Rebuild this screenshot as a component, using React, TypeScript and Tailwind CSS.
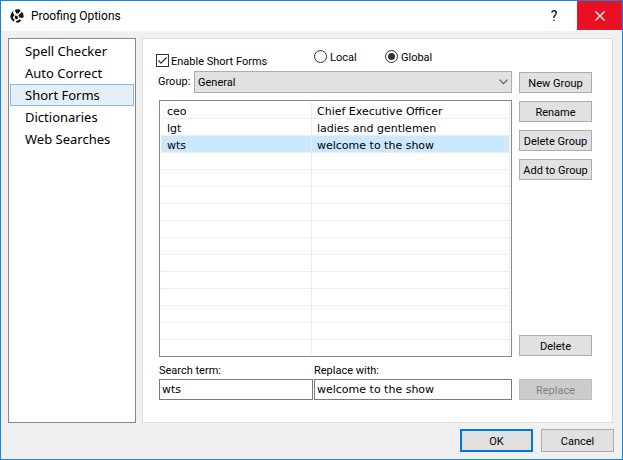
import { useState } from "react";

const sections = ["Spell Checker", "Auto Correct", "Short Forms", "Dictionaries", "Web Searches"];

const entries = [
  ["ceo", "Chief Executive Officer"],
  ["lgt", "ladies and gentlemen"],
  ["wts", "welcome to the show"],
];

const rows = Array.from({ length: 15 }, (_, i) => entries[i] ?? ["", ""]);

function PushButton({ children, disabled }: { children: string; disabled?: boolean }) {
  return (
    <button
      type="button"
      disabled={disabled}
      className="h-[21px] w-full border border-[#adadad] bg-[#e1e1e1] pt-[2px] text-center leading-4 whitespace-nowrap disabled:border-[#bfbfbf] disabled:bg-[#cccccc] disabled:text-[#838383]"
    >
      {children}
    </button>
  );
}

function Scope({ label, checked, onChange }: { label: string; checked: boolean; onChange: () => void }) {
  return (
    <label className="flex w-[71px] items-center gap-[3px]">
      <input
        type="radio"
        name="scope"
        checked={checked}
        onChange={onChange}
        className="size-[13px] shrink-0 appearance-none rounded-full border border-[#333333] bg-white bg-clip-content p-[2px] checked:bg-[#333333]"
      />
      <span className="pt-1 leading-3">{label}</span>
    </label>
  );
}

export default function App() {
  const [section, setSection] = useState("Short Forms");
  const [scope, setScope] = useState("Global");
  const [enabled, setEnabled] = useState(true);
  const [selected, setSelected] = useState(2);
  const [term, setTerm] = useState("wts");
  const [replacement, setReplacement] = useState("welcome to the show");

  return (
    <div className="flex min-h-screen w-full flex-col border border-[#1883d7] bg-[#f0f0f0] font-[Roboto,sans-serif] text-[11px] leading-4 text-black">
      <header className="flex h-[30px] items-start bg-white">
        <div className="flex h-[29px] flex-1 items-center gap-[7px] pl-[9px]">
          <svg viewBox="0 0 14 14" className="size-[14px]" aria-hidden="true">
            <g fill="#111">
              <path d="M3.500 1.500 1 4.500.3 8l1.500 3 2 1.700.8-1.700L2.700 8.500 4.500 6 3 4z" />
              <path d="M5.500.6 9 .3l1.700 1L8.500 4.500 6.500 4.500 5 2z" />
              <path d="M12 2.700 13.300 5l.4 3-1.500 1L9.500 8.500 8.300 6.500z" />
              <path d="M5.500 6.200 7.700 7.500 8 9.500 6 10.500 4.500 8.500z" />
              <path d="M6 12.200 9.500 10.500l2 .8L9 13.500 6.500 13.700z" />
            </g>
          </svg>
          <h1 className="text-[12px]">Proofing Options</h1>
        </div>
        <button type="button" aria-label="Help" className="h-[29px] w-[46px] text-[14px]">
          ?
        </button>
        <button type="button" aria-label="Close" className="flex h-[29px] w-[45px] items-center justify-center bg-[#e81123]">
          <svg viewBox="0 0 10 10" className="size-[10px]" aria-hidden="true">
            <path d="M.5.5l9 9M9.500.5l-9 9" stroke="#fff" strokeWidth="1.200" fill="none" />
          </svg>
        </button>
      </header>

      <div className="flex flex-1 gap-[6px] px-[7px] pt-[7px] pr-[9px]">
        <nav className="w-[128px] shrink-0 border border-[#828790] bg-white p-px font-['Noto_Sans',sans-serif] text-[13px]">
          {sections.map((name) => (
            <button
              key={name}
              type="button"
              onClick={() => setSection(name)}
              className={
                name === section
                  ? "block h-[22px] w-full rounded-[1px] border border-[#84bdea] bg-[#e5eff8] pl-[14px] text-left leading-5"
                  : "block h-[22px] w-full border border-transparent pl-[14px] text-left leading-5"
              }
            >
              {name}
            </button>
          ))}
        </nav>

        <main className="flex flex-1 gap-[7px] border border-[#dcdcdc] bg-white pt-[9px] pr-[20px] pb-[22px] pl-[13px]">
          <div className="min-w-0 flex-1">
            <div className="flex h-[23px] items-start">
              <label className="flex w-[158px] items-center gap-[2px] pt-1">
                <span className="grid shrink-0">
                  <input
                    type="checkbox"
                    checked={enabled}
                    onChange={() => setEnabled(!enabled)}
                    className="peer col-start-1 row-start-1 size-[13px] appearance-none border border-[#333333] bg-white"
                  />
                  <svg viewBox="0 0 13 13" className="pointer-events-none invisible col-start-1 row-start-1 size-[13px] peer-checked:visible" aria-hidden="true">
                    <path d="M2.500 6.500 5 9.200 10.600 3.500" fill="none" stroke="#333" strokeWidth="1.200" />
                  </svg>
                </span>
                <span className="pt-1 leading-3">Enable Short Forms</span>
              </label>
              <Scope label="Local" checked={scope === "Local"} onChange={() => setScope("Local")} />
              <Scope label="Global" checked={scope === "Global"} onChange={() => setScope("Global")} />
            </div>

            <div className="flex items-center">
              <label htmlFor="group" className="w-[38px] pl-[2px]">
                Group:
              </label>
              <div className="grid flex-1">
                <select
                  id="group"
                  className="col-start-1 row-start-1 h-[22px] w-full appearance-none border border-[#adadad] bg-[#e1e1e1] px-[3px] pt-px"
                >
                  <option>General</option>
                </select>
                <svg viewBox="0 0 9 6" className="pointer-events-none col-start-1 row-start-1 mr-1 h-[6px] w-[9px] self-center justify-self-end" aria-hidden="true">
                  <path d="M.5.700l4 4 4-4" fill="none" stroke="#555" strokeWidth="1.100" />
                </svg>
              </div>
            </div>

            <div className="mt-[7px] ml-[3px] border border-[#828790] p-px">
              <table className="w-full table-fixed border-separate border-spacing-0 font-['DejaVu_Sans',sans-serif] text-[11px]">
                <colgroup>
                  <col className="w-[151px]" />
                  <col />
                </colgroup>
                <tbody>
                  {rows.map(([short, full], i) => (
                    <tr
                      key={i}
                      onClick={() => short && setSelected(i)}
                      className={i === selected ? "group h-[17px] bg-[#cce8ff] last:h-[15px]" : "group h-[17px] last:h-[15px]"}
                    >
                      <td className="border-r border-b border-[#ededed] pt-[3px] pb-0 pl-[6px] leading-[13px] group-last:border-b-0 group-last:pt-0">{short}</td>
                      <td className="border-r border-b border-[#ededed] pt-[3px] pb-0 pl-[5px] leading-[13px] group-last:border-b-0 group-last:pt-0">{full}</td>
                    </tr>
                  ))}
                </tbody>
              </table>
            </div>

            <div className="mt-[6px] ml-[3px] flex gap-px">
              <div className="w-[154px]">
                <label htmlFor="term" className="block">
                  Search term:
                </label>
                <input
                  id="term"
                  value={term}
                  onChange={(e) => setTerm(e.target.value)}
                  className="block h-[21px] w-full border border-[#7a7a7a] bg-white px-[2px] font-['DejaVu_Sans',sans-serif] text-[11px]"
                />
              </div>
              <div className="flex-1">
                <label htmlFor="replacement" className="block">
                  Replace with:
                </label>
                <input
                  id="replacement"
                  value={replacement}
                  onChange={(e) => setReplacement(e.target.value)}
                  className="block h-[21px] w-full border border-[#7a7a7a] bg-white px-[2px] font-['DejaVu_Sans',sans-serif] text-[11px]"
                />
              </div>
            </div>
          </div>

          <div className="flex w-[73px] shrink-0 flex-col gap-2 pt-6">
            <PushButton>New Group</PushButton>
            <PushButton>Rename</PushButton>
            <PushButton>Delete Group</PushButton>
            <PushButton>Add to Group</PushButton>
            <div className="mt-auto flex flex-col gap-[23px]">
              <PushButton>Delete</PushButton>
              <PushButton disabled>Replace</PushButton>
            </div>
          </div>
        </main>
      </div>

      <footer className="flex justify-end gap-2 pt-[6px] pr-2 pb-[7px]">
        <button type="button" className="h-[23px] w-[73px] border-2 border-[#0078d7] bg-[#e1e1e1] pt-[2px]">
          OK
        </button>
        <button type="button" className="h-[23px] w-[73px] border border-[#adadad] bg-[#e1e1e1] pt-[2px]">
          Cancel
        </button>
      </footer>
    </div>
  );
}
